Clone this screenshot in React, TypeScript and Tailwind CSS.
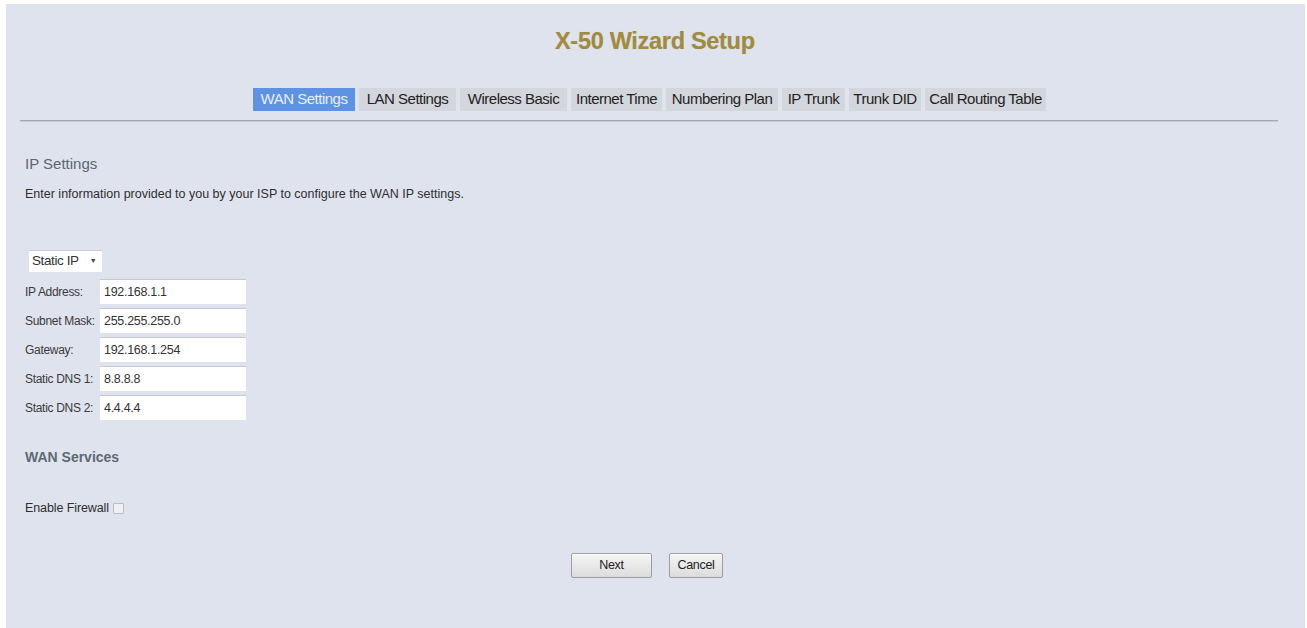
import React from "react";

const font = { fontFamily: '"Liberation Sans", Arial, sans-serif' };

const tabs = [
  { label: "WAN Settings", w: 102, active: true },
  { label: "LAN Settings", w: 97 },
  { label: "Wireless Basic", w: 107 },
  { label: "Internet Time", w: 91 },
  { label: "Numbering Plan", w: 112 },
  { label: "IP Trunk", w: 63 },
  { label: "Trunk DID", w: 72 },
  { label: "Call Routing Table", w: 121 },
];

const rows = [
  { label: "IP Address:", value: "192.168.1.1" },
  { label: "Subnet Mask:", value: "255.255.255.0" },
  { label: "Gateway:", value: "192.168.1.254" },
  { label: "Static DNS 1:", value: "8.8.8.8" },
  { label: "Static DNS 2:", value: "4.4.4.4" },
];

export default function App() {
  return (
    <div className="w-[1307px] h-[628px] bg-white overflow-hidden" style={font}>
      <div className="ml-[6px] mr-[2px] mt-[4px] h-[624px] bg-[#dfe3ee] flex flex-col">
        <div className="pt-[24px] pl-[549px] h-[58px]">
          <h1 className="text-[23.5px] leading-[27px] font-bold text-[#a08b3f] tracking-[-0.3px] [text-shadow:0_0_1px_rgba(160,139,63,0.4)]">
            X-50 Wizard Setup
          </h1>
        </div>
        <div className="flex pl-[247px] gap-[4px] mt-[26px] h-[23px]">
          {tabs.map((t) => (
            <div
              key={t.label}
              style={{ width: t.w }}
              className={
                "flex items-center justify-center text-[15px] tracking-[-0.5px] h-[23px] whitespace-nowrap " +
                (t.active
                  ? "bg-[#5f92e3] text-[#e8f0ff]"
                  : "bg-[#d3d6dc] text-[#222]")
              }
            >
              {t.label}
            </div>
          ))}
        </div>
        <div className="mt-[9px] ml-[14px] w-[1258px] h-[2px] bg-[#a3a7ae] border-b border-[#c8ccd3]"></div>

        <div className="pl-[19px] flex flex-col">
          <div className="mt-[34px] text-[15px] text-[#5c6670] tracking-[0px] leading-[16px]">IP Settings</div>
          <div className="mt-[15px] text-[12.5px] text-[#2e2e2e] tracking-[0px] leading-[14px] whitespace-nowrap">
            Enter information provided to you by your ISP to configure the WAN IP settings.
          </div>
          <div className="mt-[49px] ml-[4px] w-[73px] h-[22px] bg-white border-t border-[#c9ccd2] flex items-center pl-[3px] text-[13.5px] text-[#333] tracking-[-0.4px]">
            Static IP
            <span className="ml-[11px] text-[7px] text-[#444]">▼</span>
          </div>
          <div className="mt-[7px] flex flex-col gap-[4px]">
            {rows.map((r) => (
              <div key={r.label} className="flex items-center h-[25px]">
                <div className="w-[75px] text-[12px] text-[#3a3a3a] tracking-[-0.3px] whitespace-nowrap">{r.label}</div>
                <div className="w-[146px] h-[25px] bg-white border-t border-[#c6cad0] flex items-center pl-[4px] text-[12.5px] text-[#333] tracking-[-0.3px]">
                  {r.value}
                </div>
              </div>
            ))}
          </div>
          <div className="mt-[29px] text-[14px] font-bold text-[#5d6a72] tracking-[0px] leading-[16px]">WAN Services</div>
          <div className="mt-[34px] flex items-center text-[12.5px] text-[#2e2e2e] tracking-[-0.1px]">
            Enable Firewall
            <span className="ml-[4px] inline-block w-[11px] h-[11px] border border-[#b9bcc2] bg-[#eef0f4] rounded-[1px]"></span>
          </div>
        </div>

        <div className="mt-[35px] flex pl-[565px] gap-[17px]">
          <button className="w-[81px] h-[25px] border border-[#9a9da3] rounded-[2px] bg-gradient-to-b from-[#f6f6f6] to-[#dcdcdc] text-[12.5px] text-[#222] tracking-[-0.3px] shadow-[inset_0_1px_0_#fff]">
            Next
          </button>
          <button className="w-[54px] h-[25px] border border-[#9a9da3] rounded-[2px] bg-gradient-to-b from-[#f6f6f6] to-[#dcdcdc] text-[12.5px] text-[#222] tracking-[-0.3px] shadow-[inset_0_1px_0_#fff]">
            Cancel
          </button>
        </div>
      </div>
    </div>
  );
}
